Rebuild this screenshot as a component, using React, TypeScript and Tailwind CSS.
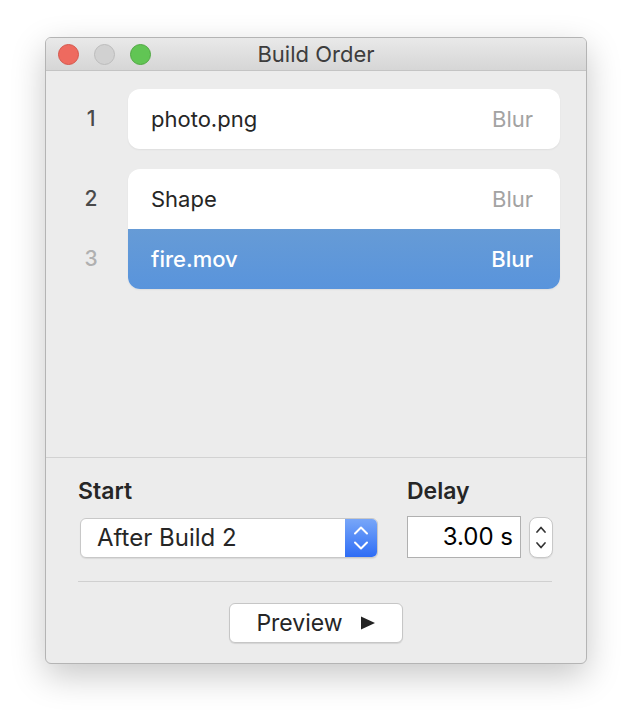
import React from "react";

const rows = [
  { group: 0, num: "1", name: "photo.png", effect: "Blur" },
  { group: 1, num: "2", name: "Shape", effect: "Blur" },
  { group: 1, num: "3", name: "fire.mov", effect: "Blur", selected: true },
];

// up/down chevron pair used by the popup and the stepper
const Chevrons: React.FC<{ color: string; w: number; h: number; cw: number; ch: number; sw: number }> = ({
  color,
  w,
  h,
  cw,
  ch,
  sw,
}) => {
  const l = (w - cw) / 2;
  const r = l + cw;
  const m = w / 2;
  const top = 1.5;
  const bot = h - 1.5;
  return (
    <svg width={w} height={h} viewBox={`0 0 ${w} ${h}`} fill="none">
      <path d={`M${l} ${top + ch} L${m} ${top} L${r} ${top + ch}`} stroke={color} strokeWidth={sw} strokeLinecap="round" strokeLinejoin="round" />
      <path d={`M${l} ${bot - ch} L${m} ${bot} L${r} ${bot - ch}`} stroke={color} strokeWidth={sw} strokeLinecap="round" strokeLinejoin="round" />
    </svg>
  );
};

const App: React.FC = () => {
  const groups = [rows.filter((r) => r.group === 0), rows.filter((r) => r.group === 1)];

  return (
    <div
      className="w-[632px] min-h-[718px] bg-white flex justify-center pt-[37px] text-[#262626]"
      style={{ fontFamily: "Inter, 'Liberation Sans', sans-serif" }}
    >
      <div className="w-[542px] h-[627px] flex flex-col rounded-[6px] border border-[#b4b4b4] bg-[#ececec] shadow-[0_12px_34px_rgba(0,0,0,0.22)] overflow-hidden">
        {/* title bar */}
        <div className="h-[33px] grid grid-cols-[1fr_auto_1fr] items-center bg-gradient-to-b from-[#e9e9e9] to-[#d6d6d6] border-b border-[#c4c4c4]">
          <div className="flex items-center gap-[15px] pl-[12px]">
            <span className="w-[21px] h-[21px] rounded-full bg-[#ee6a5f] border border-[#d5564b]" />
            <span className="w-[21px] h-[21px] rounded-full bg-[#d1d1d1] border border-[#bcbcbc]" />
            <span className="w-[21px] h-[21px] rounded-full bg-[#61c554] border border-[#50a842]" />
          </div>
          <div className="text-[22px] text-[#3d3d3d] leading-none">Build Order</div>
          <div />
        </div>

        {/* build list */}
        <div className="flex-1 flex flex-col gap-[20px] pt-[18px] pl-[33px] pr-[26px]">
          {groups.map((g, gi) => (
            <div key={gi} className="flex gap-[25px]">
              <div className="w-[24px] flex flex-col">
                {g.map((r) => (
                  <div
                    key={r.num}
                    className={`h-[60px] flex items-center justify-center text-[21px] font-medium ${
                      r.selected ? "text-[#b0b0b0]" : "text-[#4a4a4a]"
                    }`}
                  >
                    {r.num}
                  </div>
                ))}
              </div>
              <div className="flex-1 rounded-[12px] overflow-hidden bg-white shadow-[0_1px_2px_rgba(0,0,0,0.06)]">
                {g.map((r) => (
                  <div
                    key={r.num}
                    className={`h-[60px] flex items-center justify-between pl-[23px] pr-[27px] text-[22px] ${
                      r.selected
                        ? "bg-gradient-to-b from-[#669bd6] to-[#5994dc] text-white font-medium"
                        : "text-[#262626]"
                    }`}
                  >
                    <span>{r.name}</span>
                    <span className={r.selected ? "text-white" : "text-[#a3a3a3]"}>{r.effect}</span>
                  </div>
                ))}
              </div>
            </div>
          ))}
        </div>

        {/* options */}
        <div className="h-[206px] border-t border-[#d2d2d2] px-[32px] pt-[20px] flex flex-col">
          <div className="flex pl-[2px]">
            <div className="w-[298px] flex flex-col">
              <div className="text-[23px] font-semibold leading-[26px] -ml-[2px]">Start</div>
              <div className="mt-[14px] h-[40px] flex rounded-[6px] bg-white border border-[#c8c8c8] shadow-[0_1px_1px_rgba(0,0,0,0.08)] overflow-hidden">
                <div className="flex-1 flex items-center pl-[16px] text-[24px]">After Build 2</div>
                <div className="w-[32px] flex items-center justify-center bg-gradient-to-b from-[#78a6f8] to-[#2e6cf5]">
                  <Chevrons color="#ffffff" w={16} h={24} cw={12} ch={6} sw={2} />
                </div>
              </div>
            </div>
            <div className="ml-[29px] flex flex-col">
              <div className="text-[23px] font-semibold leading-[26px]">Delay</div>
              <div className="mt-[12px] flex items-center gap-[8px]">
                <div className="w-[114px] h-[42px] bg-white border border-[#b0b0b0] flex items-center justify-end pr-[7px] text-[24px] text-black">
                  3.00 s
                </div>
                <div className="w-[24px] h-[41px] rounded-[8px] bg-white border border-[#c8c8c8] shadow-[0_1px_1px_rgba(0,0,0,0.08)] flex items-center justify-center">
                  <Chevrons color="#333333" w={12} h={23} cw={8} ch={4.5} sw={1.7} />
                </div>
              </div>
            </div>
          </div>

          <div className="mt-[23px] h-px bg-[#d0d0d0] mr-[2px]" />

          <div className="mt-[21px] flex justify-center">
            <button className="w-[174px] h-[40px] rounded-[6px] bg-white border border-[#c6c6c6] shadow-[0_1px_1px_rgba(0,0,0,0.1)] flex items-center justify-center gap-[17px] text-[23px]">
              <span>Preview</span>
              <svg width="16" height="14" viewBox="0 0 16 14">
                <polygon points="1,0.5 15,7 1,13.5" fill="#222222" />
              </svg>
            </button>
          </div>
        </div>
      </div>
    </div>
  );
};

export default App;
